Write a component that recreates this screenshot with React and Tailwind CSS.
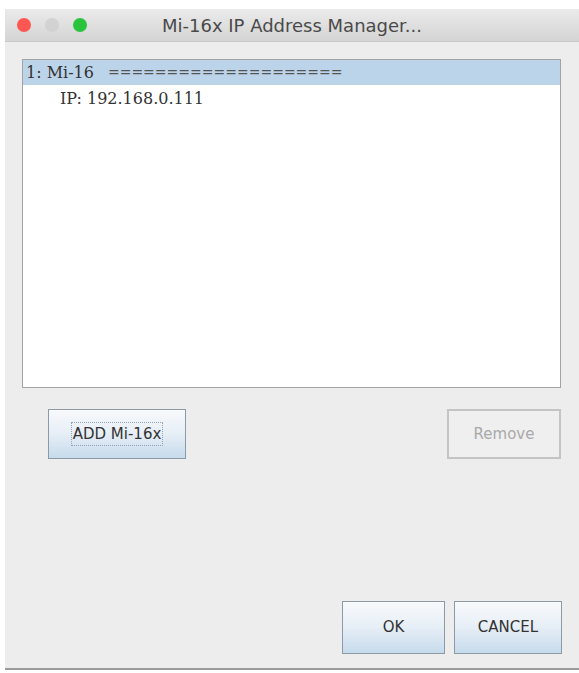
import React from "react";

export default function App() {
  const sans = { fontFamily: '"DejaVu Sans", Verdana, sans-serif' };
  const serif = { fontFamily: '"DejaVu Serif", Georgia, serif' };
  const btn =
    "border border-[#8c99a6] bg-gradient-to-b from-[#f8fafc] via-[#e6eef6] to-[#c6dbec] flex items-center justify-center text-[15px] text-[#333]";
  return (
    <div className="w-[579px] h-[673px] bg-white overflow-hidden">
      <div className="ml-[5px] mt-[9px] w-[574px] h-[661px] bg-[#eeedee] border-b-[2px] border-[#9a9a9a] flex flex-col">
        {/* title bar */}
        <div className="h-[33px] grid grid-cols-[1fr_auto_1fr] items-center bg-gradient-to-b from-[#ebebeb] to-[#d4d4d4] border-b border-[#c8c8c8]">
          <div className="flex items-center gap-[14px] pl-[12px]">
            <span className="w-[14px] h-[14px] rounded-full bg-[#fc5753]" />
            <span className="w-[14px] h-[14px] rounded-full bg-[#d2d2d2]" />
            <span className="w-[14px] h-[14px] rounded-full bg-[#29c33e]" />
          </div>
          <div className="text-[18px] text-[#4a4a4a]" style={sans}>
            Mi-16x IP Address Manager...
          </div>
          <div />
        </div>
        {/* content */}
        <div className="flex-1 flex flex-col pl-[17px] pt-[17px]">
          <div className="w-[539px] h-[329px] bg-white border border-[#a3a3a3] flex flex-col">
            <div className="h-[25px] bg-[#bcd4ea] flex items-center pl-[3px] text-[16px] text-[#333] whitespace-pre" style={serif}>
              <span>1: Mi-16</span>
              <span className="ml-[14px] text-[14px] text-[#555]">====================</span>
            </div>
            <div className="h-[27px] flex items-center pl-[37px] text-[16px] text-[#333]" style={serif}>
              IP: 192.168.0.111
            </div>
          </div>
          <div className="w-[539px] mt-[21px] flex justify-between">
            <button className={`ml-[26px] w-[138px] h-[50px] ${btn}`} style={sans}>
              <span className="px-[1px] border border-dotted border-[#8fa3b6]">ADD Mi-16x</span>
            </button>
            <button className="w-[114px] h-[50px] border-2 border-[#c4c4c4] bg-[#efeff0] flex items-center justify-center text-[15px] text-[#a9a9a9]" style={sans}>
              Remove
            </button>
          </div>
          <div className="flex-1" />
          <div className="w-[540px] flex justify-end gap-[9px] mb-[14px]">
            <button className={`w-[103px] h-[53px] ${btn}`} style={sans}>
              OK
            </button>
            <button className={`w-[108px] h-[53px] ${btn}`} style={sans}>
              CANCEL
            </button>
          </div>
        </div>
      </div>
    </div>
  );
}
